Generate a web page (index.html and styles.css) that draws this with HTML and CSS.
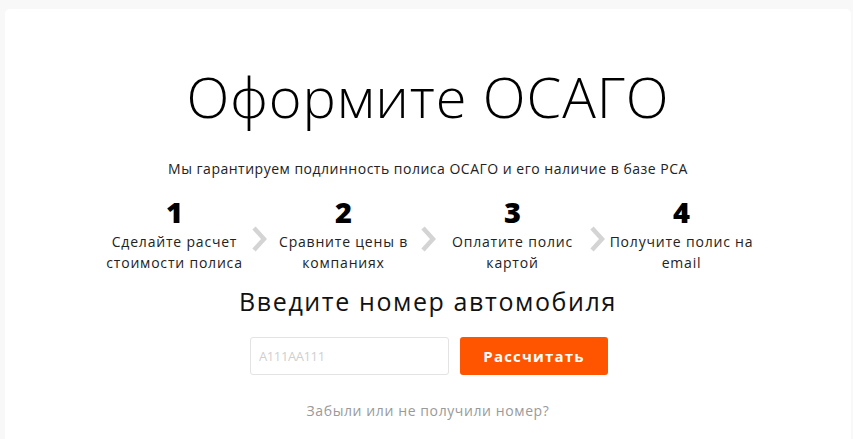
FILE: index.html
```html
<!DOCTYPE html>
<html lang="ru">
<head>
<meta charset="utf-8">
<title>Оформите ОСАГО</title>
<link rel="stylesheet" href="styles.css">
</head>
<body>
<main class="card">
  <h1 class="title">Оформите ОСАГО</h1>
  <p class="subtitle">Мы гарантируем подлинность полиса ОСАГО и его наличие в базе РСА</p>
  <ol class="steps">
    <li class="step"><span class="step-num">1</span><span class="step-text">Сделайте расчет стоимости полиса</span></li>
    <li class="arrow"><svg width="16" height="26" viewBox="0 0 16 26"><path d="M3 2 L13 13 L3 24" fill="none" stroke="#d4d4d4" stroke-width="4.5" stroke-linejoin="miter"/></svg></li>
    <li class="step"><span class="step-num">2</span><span class="step-text">Сравните цены в компаниях</span></li>
    <li class="arrow"><svg width="16" height="26" viewBox="0 0 16 26"><path d="M3 2 L13 13 L3 24" fill="none" stroke="#d4d4d4" stroke-width="4.5" stroke-linejoin="miter"/></svg></li>
    <li class="step"><span class="step-num">3</span><span class="step-text">Оплатите полис картой</span></li>
    <li class="arrow"><svg width="16" height="26" viewBox="0 0 16 26"><path d="M3 2 L13 13 L3 24" fill="none" stroke="#d4d4d4" stroke-width="4.5" stroke-linejoin="miter"/></svg></li>
    <li class="step"><span class="step-num">4</span><span class="step-text">Получите полис на email</span></li>
  </ol>
  <h2 class="form-title">Введите номер автомобиля</h2>
  <form class="form">
    <input class="input" type="text" placeholder="А111АА111">
    <button class="button" type="button">Рассчитать</button>
  </form>
  <a class="forgot" href="#">Забыли или не получили номер?</a>
</main>
</body>
</html>
```

FILE: styles.css
```css
* { box-sizing: border-box; }
html, body { height: 100%; }
body {
  margin: 0;
  background: #f8f8f8;
  font-family: "Open Sans", "Liberation Sans", sans-serif;
  color: #111;
  padding: 9px 0 0 5px;
  overflow: hidden;
}
.card {
  background: #fff;
  border-radius: 5px 5px 0 0;
  width: 846px;
  min-height: 440px;
  display: flex;
  flex-direction: column;
  align-items: center;
  padding-top: 56px;
}
.title {
  margin: 0;
  font-weight: 300;
  font-size: 56px;
  line-height: 62px;
  letter-spacing: 0.9px;
  color: #000;
}
.subtitle {
  margin: 33px 0 0;
  font-size: 14px;
  line-height: 18px;
  color: #222;
  letter-spacing: 0.5px;
}
.steps {
  list-style: none;
  margin: 19px 0 0;
  padding: 0;
  display: flex;
  align-items: flex-start;
}
.step {
  width: 153px;
  display: flex;
  flex-direction: column;
  align-items: center;
  text-align: center;
}
.step-num {
  font-size: 29px;
  font-weight: 800;
  line-height: 30px;
  color: #000;
}
.step-text {
  margin-top: 4px;
  font-size: 14px;
  line-height: 21px;
  color: #222;
  letter-spacing: 0.8px;
}
.arrow {
  width: 16px;
  margin-top: 29px;
  display: flex;
}
.form-title {
  margin: 13px 0 0;
  font-weight: 400;
  font-size: 25px;
  line-height: 30px;
  letter-spacing: 1.6px;
  color: #111;
}
.form {
  display: flex;
  gap: 11px;
  margin-top: 21px;
  margin-left: 2px;
}
.input {
  width: 199px;
  height: 38px;
  border: 1px solid #e3e3e3;
  border-radius: 3px;
  padding: 0 8px;
  font-family: inherit;
  font-size: 13px;
  color: #333;
  outline: none;
}
.input::placeholder { color: #cfcfcf; letter-spacing: -0.4px; }
.button {
  width: 148px;
  height: 38px;
  border: 0;
  border-radius: 3px;
  background: #ff5500;
  color: #fff;
  font-family: inherit;
  font-weight: 700;
  font-size: 15px;
  letter-spacing: 1.2px;
}
.forgot {
  margin-top: 27px;
  font-size: 14px;
  line-height: 18px;
  color: #9a9a9a;
  text-decoration: none;
  letter-spacing: 0.6px;
}
```
